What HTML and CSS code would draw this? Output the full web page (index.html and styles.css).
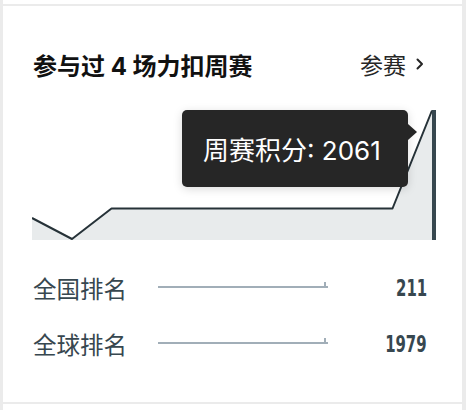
FILE: index.html
```html
<!DOCTYPE html>
<html lang="zh-CN">
<head>
<meta charset="utf-8">
<title>周赛</title>
<link rel="stylesheet" href="styles.css">
</head>
<body>
<div class="page">
  <div class="card card-prev"></div>
  <div class="card card-main">
    <div class="header">
      <div class="title">参与过 4 场力扣周赛</div>
      <a class="link" href="#">参赛<svg class="chev" width="8" height="12" viewBox="0 0 8 12"><polyline points="1.5,1.5 6,6 1.5,10.5" fill="none" stroke="#262626" stroke-width="2" stroke-linecap="round" stroke-linejoin="round"/></svg></a>
    </div>
    <div class="chart">
      <svg class="plot" width="404" height="130" viewBox="0 0 404 130">
        <polygon points="0,108 40,129 79.5,98.5 360.5,98.5 400,0.5 400,130 0,130" fill="#e8ebec"/>
        <polyline points="0,108 40,129 79.5,98.5 360.5,98.5 400,0.5" fill="none" stroke="#263238" stroke-width="2" stroke-linejoin="round"/>
        <rect x="400" y="0" width="4" height="130" fill="#37474f"/>
      </svg>
      <div class="tooltip">周赛积分: 2061<span class="arrow"></span></div>
    </div>
    <div class="ranks">
      <div class="row">
        <div class="label">全国排名</div>
        <div class="bar"><span class="tick"></span></div>
        <div class="num"><span class="num-text">211</span></div>
      </div>
      <div class="row">
        <div class="label">全球排名</div>
        <div class="bar"><span class="tick"></span></div>
        <div class="num"><span class="num-text">1979</span></div>
      </div>
    </div>
  </div>
  <div class="card card-next"></div>
</div>
</body>
</html>
```
FILE: styles.css
```css
html, body {
  margin: 0;
  padding: 0;
  background: #ebebeb;
}
body {
  width: 466px;
  height: 410px;
  overflow: hidden;
  font-family: Inter, "Noto Sans CJK SC", sans-serif;
}
.page {
  padding: 0 4px 0 3px;
  display: flex;
  flex-direction: column;
  gap: 2px;
}
.card {
  background: #fff;
}
.card-prev {
  height: 4px;
}
.card-next {
  height: 20px;
}
.card-main {
  height: 396px;
  box-sizing: border-box;
  padding: 42px 26px 0 29px;
  display: flex;
  flex-direction: column;
}
.header {
  height: 32px;
  display: flex;
  align-items: center;
  justify-content: space-between;
  padding-left: 1px;
  padding-right: 12px;
}
.title {
  font-size: 24px;
  font-weight: 700;
  color: #111;
}
.link {
  display: flex;
  align-items: center;
  gap: 10px;
  font-size: 23px;
  color: #262626;
  text-decoration: none;
}
.chev {
  display: block;
}
.chart {
  margin-top: 30px;
  height: 130px;
  position: relative;
}
.plot {
  display: block;
}
.tooltip {
  position: absolute;
  left: 150px;
  top: 0;
  width: 226px;
  height: 77px;
  box-sizing: border-box;
  padding-left: 21px;
  display: flex;
  align-items: center;
  background: #262626;
  color: #fff;
  border-radius: 5px;
  box-shadow: 0 2px 10px rgba(0, 0, 0, 0.15);
  font-size: 26px;
}
.arrow {
  position: absolute;
  right: -9px;
  top: 14px;
  width: 0;
  height: 0;
  border-left: 9px solid #262626;
  border-top: 8px solid transparent;
  border-bottom: 8px solid transparent;
}
.ranks {
  margin-top: 20px;
  display: flex;
  flex-direction: column;
}
.row {
  height: 56px;
  display: flex;
  align-items: center;
  padding-left: 1px;
  padding-right: 9px;
}
.label {
  width: 125px;
  font-size: 23.5px;
  color: #37474f;
  font-family: "Noto Sans CJK SC", sans-serif;
}
.bar {
  width: 170px;
  height: 2px;
  background: #a1aeb8;
  position: relative;
  margin-bottom: 2px;
}
.tick {
  position: absolute;
  right: 2px;
  bottom: 2px;
  width: 2px;
  height: 4px;
  background: #a1aeb8;
}
.num {
  flex: 1;
  text-align: right;
}
.num-text {
  display: inline-block;
  font-family: "DejaVu Sans Condensed", "DejaVu Sans", sans-serif;
  font-weight: 700;
  font-size: 23px;
  color: #37474f;
  transform: scaleX(0.72);
  transform-origin: right center;
}
```
